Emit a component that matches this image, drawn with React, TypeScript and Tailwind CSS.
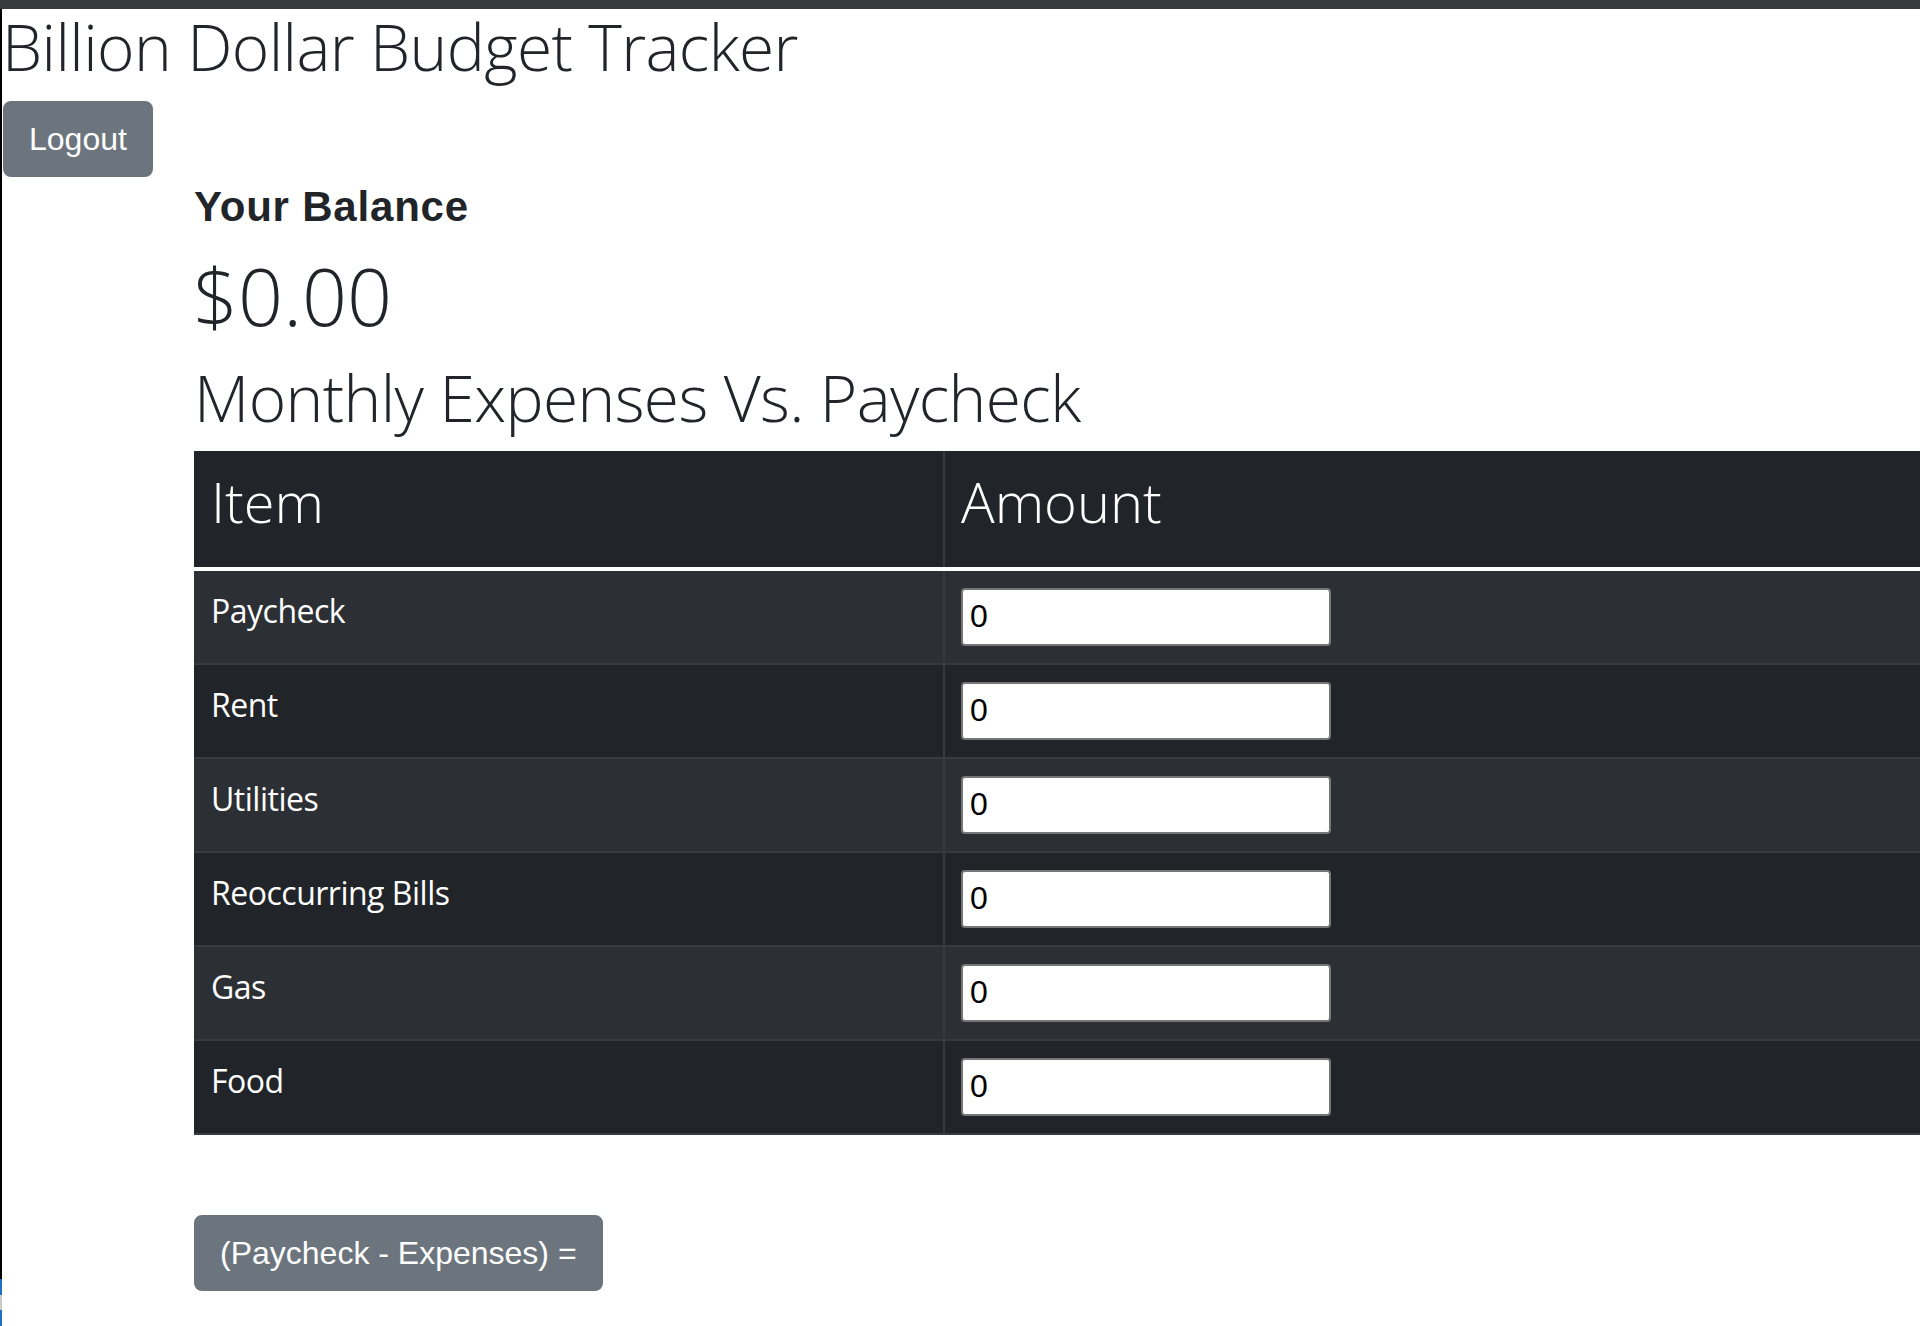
import React from "react";

const items = ["Paycheck", "Rent", "Utilities", "Reoccurring Bills", "Gas", "Food"];

export default function App() {
  return (
    <div className="min-h-screen bg-white flex flex-col overflow-hidden">
      <div className="h-[9px] bg-[#38393d] shrink-0" />
      <div className="flex flex-1">
        {/* left window edge */}
        <div className="w-[2px] shrink-0 bg-black flex flex-col justify-end">
          <div className="h-[16px] bg-[#1f6fc4]" />
          <div className="h-[15px] bg-[#c9c9c9]" />
          <div className="h-[16px] bg-[#1f6fc4]" />
        </div>

        <div className="flex-1 min-w-0 text-[#212529]">
          <h1 className="font-['Open_Sans',sans-serif] font-light text-[64px] leading-[1.2] tracking-[-0.6px]">
            Billion Dollar Budget Tracker
          </h1>

          <button className="mt-[15px] ml-[1px] h-[76px] px-[24px] rounded-lg border-2 border-[#6c757d] bg-[#6c757d] text-white font-['Liberation_Sans',Arial,sans-serif] text-[32px] leading-[48px]">
            Logout
          </button>

          <div className="pl-[192px]">
            <h5 className="mt-[5px] font-['Liberation_Sans',Arial,sans-serif] font-bold text-[42px] leading-[1.2] tracking-[0.8px]">
              Your Balance
            </h5>
            <div className="mt-[17px] font-['Open_Sans',sans-serif] font-light text-[79px] leading-[1.2] -ml-[1px]">
              $0.00
            </div>
            <h2 className="mt-[16px] font-['Open_Sans',sans-serif] font-light text-[64px] leading-[1.2] tracking-[-0.6px]">
              Monthly Expenses Vs. Paycheck
            </h2>

            <div className="mt-[14px] font-['Open_Sans',sans-serif] text-white">
              <div className="flex h-[116px] bg-[#212529]">
                <div className="w-[751px] shrink-0 border-r-2 border-[#373b3e] pl-[17px] pt-[22px] text-[56px] font-light leading-none">
                  Item
                </div>
                <div className="flex-1 pl-[16px] pt-[22px] text-[56px] font-light leading-none">Amount</div>
              </div>
              <div className="h-[4px] bg-white" />
              {items.map((item, i) => (
                <div
                  key={item}
                  className={`flex h-[94px] border-b-2 border-[#373b3e] ${i % 2 === 0 ? "bg-[#2c3034]" : "bg-[#212529]"}`}
                >
                  <div className="w-[751px] shrink-0 border-r-2 border-[#373b3e] pl-[17px] pt-[24px] text-[32px] leading-none tracking-[-0.5px]">
                    {item}
                  </div>
                  <div className="flex-1 pl-[16px] pt-[17px]">
                    <input
                      type="text"
                      defaultValue="0"
                      className="w-[370px] h-[58px] rounded-[4px] border-2 border-[#767676] bg-white px-[7px] text-black font-['Liberation_Sans',Arial,sans-serif] text-[32px] outline-none"
                    />
                  </div>
                </div>
              ))}
            </div>

            <button className="mt-[80px] h-[76px] px-[24px] rounded-lg border-2 border-[#6c757d] bg-[#6c757d] text-white font-['Liberation_Sans',Arial,sans-serif] text-[32px] leading-[48px]">
              (Paycheck - Expenses) =
            </button>
          </div>
        </div>
      </div>
    </div>
  );
}
